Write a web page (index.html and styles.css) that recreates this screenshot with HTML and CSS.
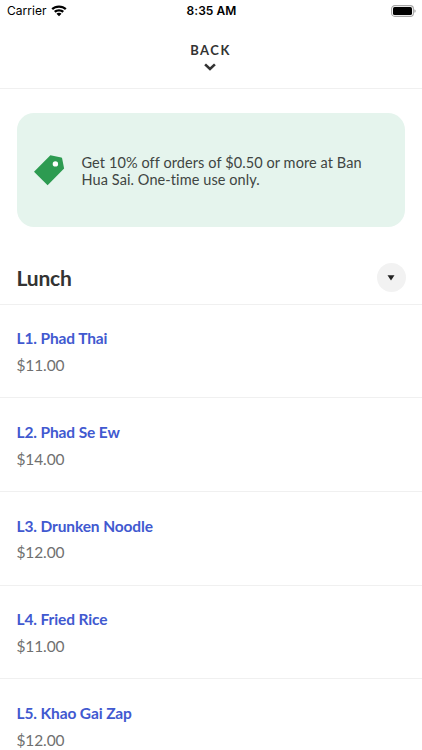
FILE: index.html
```html
<!DOCTYPE html>
<html lang="en">
<head>
<meta charset="utf-8">
<meta name="viewport" content="width=device-width, initial-scale=1">
<title>Lunch</title>
<link rel="stylesheet" href="styles.css">
</head>
<body>
<div class="status">
  <div class="carrier"><span>Carrier</span>
    <svg class="wifi" width="16" height="12" viewBox="0 0 16 12"><path d="M8 0.4C11.1.4 13.700 1.500 15.600 3.300L14 5C12.400 3.500 10.300 2.700 8 2.700S3.600 3.500 2 5L.4 3.300C2.300 1.500 4.900.4 8 .4ZM8 4.200C10 4.200 11.700 4.900 13 6.100L11.400 7.700C10.500 6.900 9.300 6.400 8 6.400S5.500 6.900 4.600 7.700L3 6.100C4.300 4.900 6 4.200 8 4.200ZM8 7.800C9 7.800 9.900 8.100 10.500 8.700L8 11.300 5.500 8.700C6.100 8.100 7 7.800 8 7.800Z"/></svg>
  </div>
  <div class="time">8:35 AM</div>
  <svg class="battery" width="25" height="12" viewBox="0 0 25 12"><rect x=".6" y=".6" width="21.800" height="10.800" rx="3.200" fill="#fff" stroke="#a6a6a6" stroke-width="1.100"/><rect x="2" y="2" width="19" height="8" rx="1.600"/><path d="M23.500 4.200C24.900 4.600 24.900 7.400 23.500 7.800Z" fill="#888"/></svg>
</div>
<header class="back">
  <span class="back-label">BACK</span>
  <svg width="13" height="8" viewBox="0 0 13 8"><path d="M1.100 1.400 6 6 10.900 1.400" fill="none" stroke="#333" stroke-width="2.600"/></svg>
</header>
<section class="promo">
  <svg class="tag" width="32" height="32" viewBox="0 0 32 32"><path fill="#2d9b51" d="M17.400 1.300 28.300 3.500Q29 3.600 29.100 4.300L31.100 14.600 14.600 31.300 1 17.700Z"/><circle cx="22.400" cy="9.900" r="2.700" fill="#fff"/></svg>
  <p class="promo-text">Get 10% off orders of $0.50 or more at Ban Hua Sai. One-time use only.</p>
</section>
<main>
  <div class="category">
    <h1>Lunch</h1>
    <button class="toggle" aria-label="Collapse"><svg width="8" height="6" viewBox="0 0 8 6"><path d="M.5.3H7.500L4 5.500Z" fill="#222"/></svg></button>
  </div>
  <ul class="menu">
    <li><h2>L1. Phad Thai</h2><p>$11.00</p></li>
    <li><h2>L2. Phad Se Ew</h2><p>$14.00</p></li>
    <li><h2>L3. Drunken Noodle</h2><p>$12.00</p></li>
    <li><h2>L4. Fried Rice</h2><p>$11.00</p></li>
    <li><h2>L5. Khao Gai Zap</h2><p>$12.00</p></li>
  </ul>
</main>
</body>
</html>
```
FILE: styles.css
```css
* { box-sizing: border-box; margin: 0; padding: 0; }
body {
  height: 750px;
  overflow: hidden;
  background: #fff;
  color: #333;
  font-family: Lato, sans-serif;
}
svg { display: block; flex: none; }
.status {
  display: grid;
  grid-template-columns: 1fr auto 1fr;
  align-items: center;
  height: 22px;
  padding: 0 6px 0 7px;
  color: #000;
  font: 12px/22px Inter, sans-serif;
}
.carrier { display: flex; align-items: center; gap: 4px; letter-spacing: .03px; }
.time { font-weight: 600; letter-spacing: .05px; }
.battery { justify-self: end; }
.back {
  display: flex;
  flex-direction: column;
  align-items: center;
  height: 67px;
  padding: 20px 1px 0 0;
  border-bottom: 1px solid #f0f0f0;
}
.back-label {
  font-size: 13px;
  line-height: 16px;
  font-weight: 700;
  letter-spacing: 1.500px;
  margin-bottom: 5px;
}
.promo {
  display: flex;
  align-items: center;
  gap: 16.500px;
  height: 114px;
  margin: 24.300px 17px 0 16.500px;
  padding: 0 34px 0 17px;
  border-radius: 17px;
  background: #e5f4ed;
}
.tag { margin-left: -.5px; }
.promo-text {
  padding-top: 1.500px;
  color: #404542;
  font-size: 14.500px;
  line-height: 17.500px;
  letter-spacing: .09px;
}
.category {
  display: flex;
  align-items: center;
  justify-content: space-between;
  height: 77.400px;
  padding: 25px 16.500px 0;
  border-bottom: 1px solid #f0f0f0;
}
h1 { font-size: 21px; line-height: 26px; font-weight: 700; letter-spacing: -.2px; }
.toggle {
  display: grid;
  place-items: center;
  width: 29px;
  height: 29px;
  border: 0;
  border-radius: 50%;
  background: #f2f2f2;
}
.menu { list-style: none; }
.menu li {
  height: 93.700px;
  padding: 22.500px 16.500px 0;
  border-bottom: 1px solid #f0f0f0;
}
h2 { color: #4159d0; font-size: 15.500px; line-height: 22px; font-weight: 700; letter-spacing: -.12px; }
.menu p { margin-top: 4.700px; color: #707070; font-size: 15.500px; line-height: 22px; letter-spacing: -.12px; }
```
